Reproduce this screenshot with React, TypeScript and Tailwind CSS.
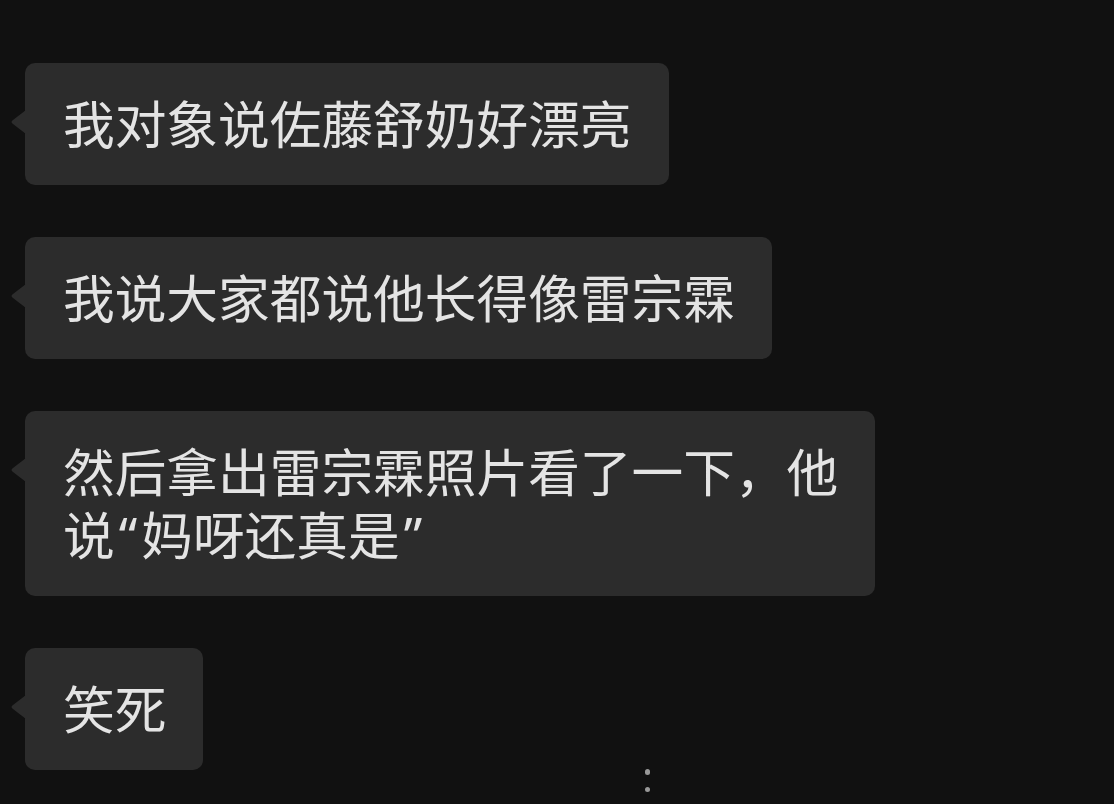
import React from "react";

const msgs: React.ReactNode[] = [
  "我对象说佐藤舒奶好漂亮",
  "我说大家都说他长得像雷宗霖",
  <>
    <div>然后拿出雷宗霖照片看了一下，他</div>
    <div className="flex">
      <span>说</span>
      <span className="mx-[4px]">“</span>
      <span>妈呀还真是</span>
      <span className="ml-[4px]">”</span>
    </div>
  </>,
  "笑死",
];

function Bubble({ text }: { text: React.ReactNode }) {
  return (
    <div className="relative self-start">
      <div className="absolute left-[-15px] top-[47px] h-[24px] w-[16px]">
        <svg width="16" height="24" viewBox="0 0 16 24">
          <path d="M16 0 L16 24 L3 14 Q0 12 3 10 Z" fill="#2c2c2c" />
        </svg>
      </div>
      <div className="max-w-[852px] rounded-[10px] bg-[#2c2c2c] py-[29.5px] pl-[38px] pr-[37px] text-[51.7px] leading-[63px] text-[#e4e4e4]">
        {text}
      </div>
    </div>
  );
}

export default function App() {
  return (
    <div
      className="relative h-[804px] w-[1114px] overflow-hidden bg-[#111111]"
      style={{ fontFamily: '"Noto Sans", "Noto Sans CJK SC", sans-serif' }}
    >
      <div className="flex flex-col gap-[52px] pl-[25px] pt-[63px]">
        {msgs.map((m, i) => (
          <Bubble key={i} text={m} />
        ))}
      </div>
      <div className="absolute left-[645px] top-[769px] h-[6px] w-[5px] rounded-full bg-[#999999]" />
      <div className="absolute left-[645px] top-[787px] h-[5px] w-[5px] rounded-full bg-[#999999]" />
    </div>
  );
}
